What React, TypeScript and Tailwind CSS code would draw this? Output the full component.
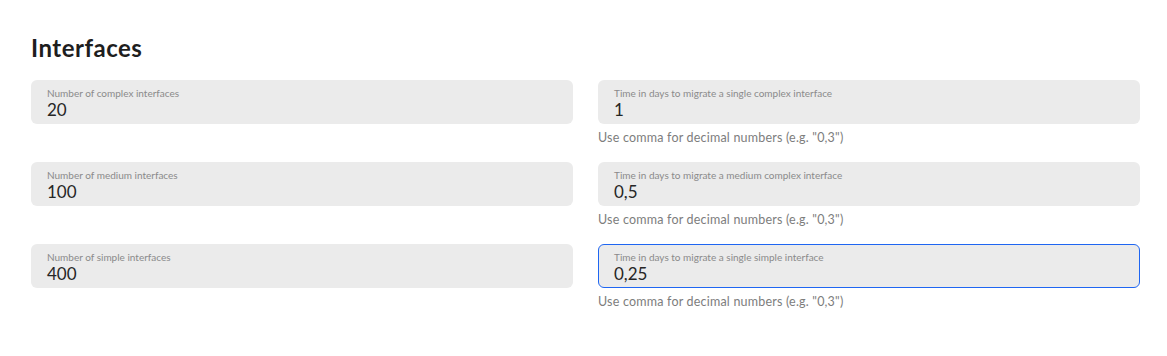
import React from "react";

const font = { fontFamily: "Lato, 'Open Sans', sans-serif" };

function Field({ label, value, focused }: { label: string; value: string; focused?: boolean }) {
  return (
    <div
      className={
        "h-[44px] rounded-[6px] bg-[#ebebeb] " +
        (focused ? "border border-[#1f66f2] px-[15px] pt-[6px]" : "px-[16px] pt-[7px]")
      }
    >
      <div className="text-[10px] leading-[12px] text-[#8a8a8a]">{label}</div>
      <div className="mt-[1px] text-[17px] leading-[20px] text-[#262626]">{value}</div>
    </div>
  );
}

function Helper() {
  return (
    <div className="mt-[5px] text-[12.5px] leading-[17px] tracking-[0.2px] text-[#7d7d7d]">
      Use comma for decimal numbers (e.g. "0,3")
    </div>
  );
}

export default function App() {
  const rows = [
    ["Number of complex interfaces", "20", "Time in days to migrate a single complex interface", "1"],
    ["Number of medium interfaces", "100", "Time in days to migrate a medium complex interface", "0,5"],
    ["Number of simple interfaces", "400", "Time in days to migrate a single simple interface", "0,25"],
  ];
  return (
    <div className="min-h-[356px] w-[1167px] bg-white pl-[31px] pr-[27px] pt-[33px]" style={font}>
      <h2 className="text-[24px] font-bold leading-[30px] tracking-[0.5px] text-[#1e1e1e]">Interfaces</h2>
      <div className="mt-[17px] grid grid-cols-2 gap-x-[25px] gap-y-[16px]">
        {rows.map((r, i) => (
          <React.Fragment key={i}>
            <div>
              <Field label={r[0]} value={r[1]} />
            </div>
            <div>
              <Field label={r[2]} value={r[3]} focused={i === 2} />
              <Helper />
            </div>
          </React.Fragment>
        ))}
      </div>
    </div>
  );
}
